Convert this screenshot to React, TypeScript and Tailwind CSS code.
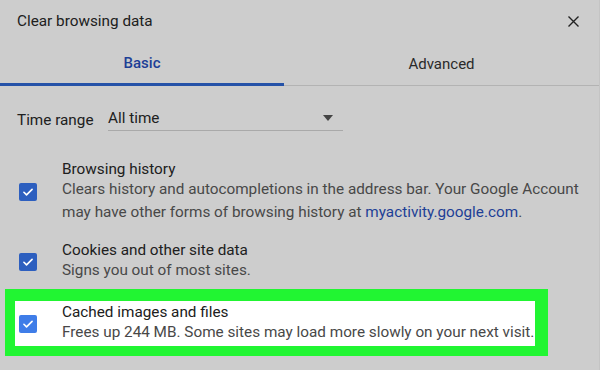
import React from 'react';

const Check = ({ bright }: { bright?: boolean }) => (
    <div
        className={`w-[18px] h-[18px] rounded-[2px] flex items-center justify-center shrink-0 ${
            bright ? 'bg-[#3f7de8]' : 'bg-[#2d5fbf]'
        }`}
    >
        <svg viewBox="0 0 24 24" className="w-[14px] h-[14px]" fill="none">
            <path d="M5 12.5l4.5 4.5L19 7.5" stroke="white" strokeWidth="2.8" strokeLinecap="round" strokeLinejoin="round" />
        </svg>
    </div>
);

const Item = ({
    title,
    children,
    bright,
}: {
    title: string;
    children: React.ReactNode;
    bright?: boolean;
}) => (
    <div className="flex items-center">
        <div className="w-[45px] pl-[2px]">
            <Check bright={bright} />
        </div>
        <div className="flex-1">
            <div className="text-[15.3px] leading-[18px] text-[#202020]">{title}</div>
            <div className="text-[15.3px] leading-[23px] text-[#484848]">{children}</div>
        </div>
    </div>
);

export default function App() {
    return (
        <div
            className="w-[600px] h-[370px] bg-[#cdcdcd] overflow-hidden border-r border-[#c4c4c4]"
            style={{ fontFamily: 'Roboto, "Noto Sans", sans-serif' }}
        >
            {/* Header */}
            <div className="h-[43px] flex items-center justify-between pl-[17px] pr-[18px]">
                <span className="text-[15.3px] text-[#202020]">Clear browsing data</span>
                <svg viewBox="0 0 24 24" className="w-[15px] h-[15px]" fill="none">
                    <path d="M4 4l16 16M20 4L4 20" stroke="#222" strokeWidth="2.2" />
                </svg>
            </div>

            {/* Tabs */}
            <div className="flex h-[43px]">
                <div className="w-[284px] flex items-center justify-center border-b-[3px] border-[#2552a8] text-[15px] font-medium text-[#1d3f96]">
                    Basic
                </div>
                <div className="flex-1 flex items-center justify-center border-b border-[#b3b3b3] text-[15px] text-[#2a2a2a]">
                    Advanced
                </div>
            </div>

            {/* Time range */}
            <div className="flex items-center pl-[17px] pt-[22px] mb-[29px]">
                <span className="text-[15.3px] leading-[20px] text-[#202020] w-[91px]">Time range</span>
                <div className="w-[235px] flex items-center justify-between border-b border-[#a9a9a9] pb-[2px] pr-[10px]">
                    <span className="text-[15.3px] leading-[20px] text-[#202020]">All time</span>
                    <svg viewBox="0 0 10 6" className="w-[10px] h-[6px]">
                        <path d="M0 0h10L5 6z" fill="#444" />
                    </svg>
                </div>
            </div>

            {/* Options */}
            <div className="pl-[17px] pr-[10px] flex flex-col gap-[17px]">
                <Item title="Browsing history">
                    Clears history and autocompletions in the address bar. Your Google Account
                    may have other forms of browsing history at{' '}
                    <span className="text-[#1d3f96]">myactivity.google.com</span>.
                </Item>
                <Item title="Cookies and other site data">Signs you out of most sites.</Item>
            </div>

            <div className="ml-[5px] mt-[7px] w-[543px] border-[12px] border-[#21f532] border-b-[10px] border-l-[10px] border-r-[13px]">
                <div className="bg-white pl-[2px] pt-[2px] pb-[2px]">
                    <Item title="Cached images and files" bright>
                        Frees up 244 MB. Some sites may load more slowly on your next visit.
                    </Item>
                </div>
            </div>
        </div>
    );
}
